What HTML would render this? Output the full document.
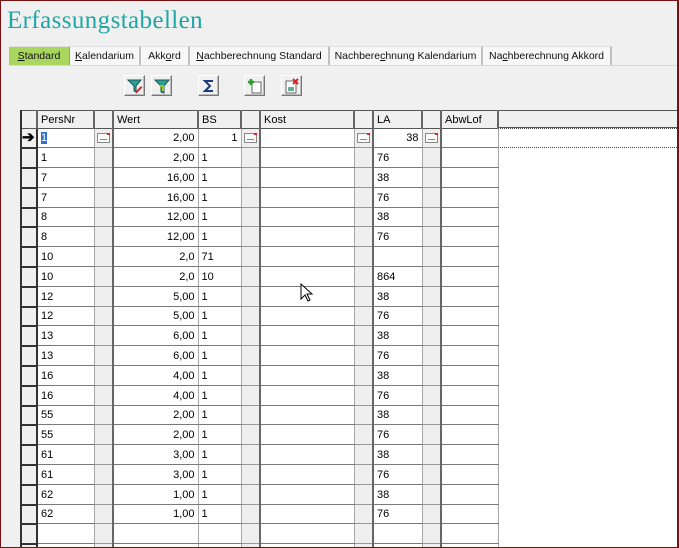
<!DOCTYPE html>
<html style="overflow:hidden"><head><meta charset="utf-8"><style>
*{margin:0;padding:0;box-sizing:border-box}
html,body{width:679px;height:548px;overflow:hidden}
body{background:#f0f0f0;font-family:"Liberation Sans",Tahoma,sans-serif;font-size:11px;position:relative}
.frame{position:absolute;left:0;top:0;width:679px;height:548px;border:1px solid #7a1010;border-width:1px 2px 1px 1px;pointer-events:none;z-index:10}
h1{position:absolute;left:7px;top:7px;font-family:"Liberation Serif",serif;font-weight:normal;font-size:25px;color:#1ea6a6;letter-spacing:0.4px}
.tabs{position:absolute;left:9px;top:46px;height:19px;display:flex;font-size:10.5px}
.tab{height:19px;line-height:18px;text-align:center;border-right:2px solid #c0c0c0;border-top:1px solid #e0e0e0;background:#f7f7f7;color:#111;white-space:nowrap;overflow:hidden}
.tab.on{background:#a8d65e;border-right:1px solid #999}
.tabline{position:absolute;left:9px;top:65px;width:668px;height:1px;background:#d8d8d8}
.btn{position:absolute;top:75px;width:21px;height:21px;background:#f0f0f0;border:1px solid;border-color:#fff #777 #777 #fff;box-shadow:inset -1px -1px 0 #bbb}
.btn svg{position:absolute;left:2px;top:2px}
.wrap{position:absolute;left:0;top:0;width:679px;height:547px;overflow:hidden}
table{position:absolute;left:20px;top:110px;width:477px;border-collapse:collapse;table-layout:fixed;background:#fff}
td{height:20px;border-bottom:1px solid #7a7a7a;border-right:1px solid #a8a8a8;padding:0 3px;white-space:nowrap;overflow:hidden;color:#000}
tr.s td{height:19px}
td.rh{background:#f0f0f0;border-left:2px solid #333;border-right:2px solid #333;border-bottom:2px solid #333;padding:0}
td.b{background:#efefef;border-right:2px solid #666;border-bottom:1px solid #999;padding:0 2px}
td.r{text-align:right}
tr.h td{background:#f0f0f0;height:18px;border-top:1px solid #555;border-bottom:1px solid #555;border-right:2px solid #666}
tr.h td.rh{border-bottom:1px solid #555}
.hdrx{position:absolute;left:497px;top:110px;width:182px;height:18px;background:#f0f0f0;border-top:1px solid #555;border-bottom:1px solid #555;border-left:1px solid #999}
.white{position:absolute;left:497px;top:128px;width:182px;height:420px;background:#fff}
.dot{position:absolute;left:497px;width:182px;border-top:1px dotted #444}
.mini{display:inline-block;width:13px;height:10px;border:1px solid #888;background:#fafafa;position:relative;vertical-align:middle}
.mini:after{content:"";position:absolute;right:-1px;top:-1px;width:3px;height:2px;background:#d22}
.mini:before{content:"";position:absolute;left:2px;top:5px;width:7px;height:1px;background:#888}
</style></head><body>
<div class="wrap">
<h1>Erfassungstabellen</h1>
<div class="tabs">
<div class="tab on" style="width:61px"><u>S</u>tandard</div>
<div class="tab" style="width:71px"><u>K</u>alendarium</div>
<div class="tab" style="width:49px">Akk<u>o</u>rd</div>
<div class="tab" style="width:140px"><u>N</u>achberechnung Standard</div>
<div class="tab" style="width:153px">Nachbere<u>c</u>hnung Kalendarium</div>
<div class="tab" style="width:129px">Na<u>c</u>hberechnung Akkord</div>
</div>
<div class="tabline"></div>
<div class="btn" style="left:124px"><svg width="16" height="16"><path d="M1 2h13l-5 6v6l-2-1V8z" fill="#2aa098" stroke="#1a5a58"/><path d="M8 14l6-6 1.5 1.5-6 6z" fill="#d0303a"/></svg></div>
<div class="btn" style="left:151px"><svg width="16" height="16"><path d="M1 2h14l-5 6v7l-3-1V8z" fill="#2aa098" stroke="#1a5a58"/><path d="M6 8h3v5" stroke="#9c2" fill="none" stroke-width="2"/></svg></div>
<div class="btn" style="left:198px"><svg width="16" height="16"><path d="M12 3H4l5 5-5 5h8" fill="none" stroke="#1b3a7a" stroke-width="2"/></svg></div>
<div class="btn" style="left:244px"><svg width="16" height="16"><rect x="5" y="4" width="9" height="11" fill="#fff" stroke="#666"/><path d="M4 1v6M1 4h6" stroke="#2a9a2a" stroke-width="2.5"/></svg></div>
<div class="btn" style="left:281px"><svg width="16" height="16"><rect x="2" y="3" width="10" height="12" fill="#fff" stroke="#666"/><rect x="4" y="9" width="6" height="4" fill="#6a9"/><path d="M9 1l5 5M14 1l-5 5" stroke="#d22" stroke-width="2"/></svg></div>
<div class="hdrx"></div>
<div class="white"></div>
<div class="dot" style="top:128px"></div>
<div class="dot" style="top:147px"></div>
<table>
<colgroup><col style="width:16px"><col style="width:57px"><col style="width:19px"><col style="width:85px"><col style="width:43px"><col style="width:19px"><col style="width:94px"><col style="width:19px"><col style="width:49px"><col style="width:19px"><col style="width:57px"></colgroup>
<tr class="h"><td class="rh"></td><td>PersNr</td><td></td><td>Wert</td><td>BS</td><td></td><td>Kost</td><td></td><td>LA</td><td></td><td>AbwLof</td></tr>
<tr class="s"><td class="rh" style="font-size:15px;font-weight:bold;line-height:12px">&#10132;</td><td><span style="background:#3070d0;color:#fff">1</span></td><td class="b"><span class="mini"></span></td><td class="r">2,00</td><td class="r">1</td><td class="b"><span class="mini"></span></td><td></td><td class="b"><span class="mini"></span></td><td class="r">38</td><td class="b"><span class="mini"></span></td><td></td></tr>
<tr><td class="rh"></td><td>1</td><td class="b"></td><td class="r">2,00</td><td>1</td><td class="b"></td><td></td><td class="b"></td><td>76</td><td class="b"></td><td></td></tr>
<tr><td class="rh"></td><td>7</td><td class="b"></td><td class="r">16,00</td><td>1</td><td class="b"></td><td></td><td class="b"></td><td>38</td><td class="b"></td><td></td></tr>
<tr><td class="rh"></td><td>7</td><td class="b"></td><td class="r">16,00</td><td>1</td><td class="b"></td><td></td><td class="b"></td><td>76</td><td class="b"></td><td></td></tr>
<tr class="s"><td class="rh"></td><td>8</td><td class="b"></td><td class="r">12,00</td><td>1</td><td class="b"></td><td></td><td class="b"></td><td>38</td><td class="b"></td><td></td></tr>
<tr><td class="rh"></td><td>8</td><td class="b"></td><td class="r">12,00</td><td>1</td><td class="b"></td><td></td><td class="b"></td><td>76</td><td class="b"></td><td></td></tr>
<tr><td class="rh"></td><td>10</td><td class="b"></td><td class="r">2,0</td><td>71</td><td class="b"></td><td></td><td class="b"></td><td></td><td class="b"></td><td></td></tr>
<tr><td class="rh"></td><td>10</td><td class="b"></td><td class="r">2,0</td><td>10</td><td class="b"></td><td></td><td class="b"></td><td>864</td><td class="b"></td><td></td></tr>
<tr><td class="rh"></td><td>12</td><td class="b"></td><td class="r">5,00</td><td>1</td><td class="b"></td><td></td><td class="b"></td><td>38</td><td class="b"></td><td></td></tr>
<tr class="s"><td class="rh"></td><td>12</td><td class="b"></td><td class="r">5,00</td><td>1</td><td class="b"></td><td></td><td class="b"></td><td>76</td><td class="b"></td><td></td></tr>
<tr><td class="rh"></td><td>13</td><td class="b"></td><td class="r">6,00</td><td>1</td><td class="b"></td><td></td><td class="b"></td><td>38</td><td class="b"></td><td></td></tr>
<tr><td class="rh"></td><td>13</td><td class="b"></td><td class="r">6,00</td><td>1</td><td class="b"></td><td></td><td class="b"></td><td>76</td><td class="b"></td><td></td></tr>
<tr><td class="rh"></td><td>16</td><td class="b"></td><td class="r">4,00</td><td>1</td><td class="b"></td><td></td><td class="b"></td><td>38</td><td class="b"></td><td></td></tr>
<tr><td class="rh"></td><td>16</td><td class="b"></td><td class="r">4,00</td><td>1</td><td class="b"></td><td></td><td class="b"></td><td>76</td><td class="b"></td><td></td></tr>
<tr class="s"><td class="rh"></td><td>55</td><td class="b"></td><td class="r">2,00</td><td>1</td><td class="b"></td><td></td><td class="b"></td><td>38</td><td class="b"></td><td></td></tr>
<tr><td class="rh"></td><td>55</td><td class="b"></td><td class="r">2,00</td><td>1</td><td class="b"></td><td></td><td class="b"></td><td>76</td><td class="b"></td><td></td></tr>
<tr><td class="rh"></td><td>61</td><td class="b"></td><td class="r">3,00</td><td>1</td><td class="b"></td><td></td><td class="b"></td><td>38</td><td class="b"></td><td></td></tr>
<tr><td class="rh"></td><td>61</td><td class="b"></td><td class="r">3,00</td><td>1</td><td class="b"></td><td></td><td class="b"></td><td>76</td><td class="b"></td><td></td></tr>
<tr><td class="rh"></td><td>62</td><td class="b"></td><td class="r">1,00</td><td>1</td><td class="b"></td><td></td><td class="b"></td><td>38</td><td class="b"></td><td></td></tr>
<tr class="s"><td class="rh"></td><td>62</td><td class="b"></td><td class="r">1,00</td><td>1</td><td class="b"></td><td></td><td class="b"></td><td>76</td><td class="b"></td><td></td></tr>
<tr><td class="rh"></td><td></td><td class="b"></td><td></td><td></td><td class="b"></td><td></td><td class="b"></td><td></td><td class="b"></td><td></td></tr>
<tr><td class="rh"></td><td></td><td class="b"></td><td></td><td></td><td class="b"></td><td></td><td class="b"></td><td></td><td class="b"></td><td></td></tr>
</table>
<svg style="position:absolute;left:300px;top:283px" width="14" height="20"><path d="M1 1v15l4-4 3 6 2-1-3-6h5z" fill="#fff" stroke="#000"/></svg>
</div>
<div class="frame"></div>
</body></html>
